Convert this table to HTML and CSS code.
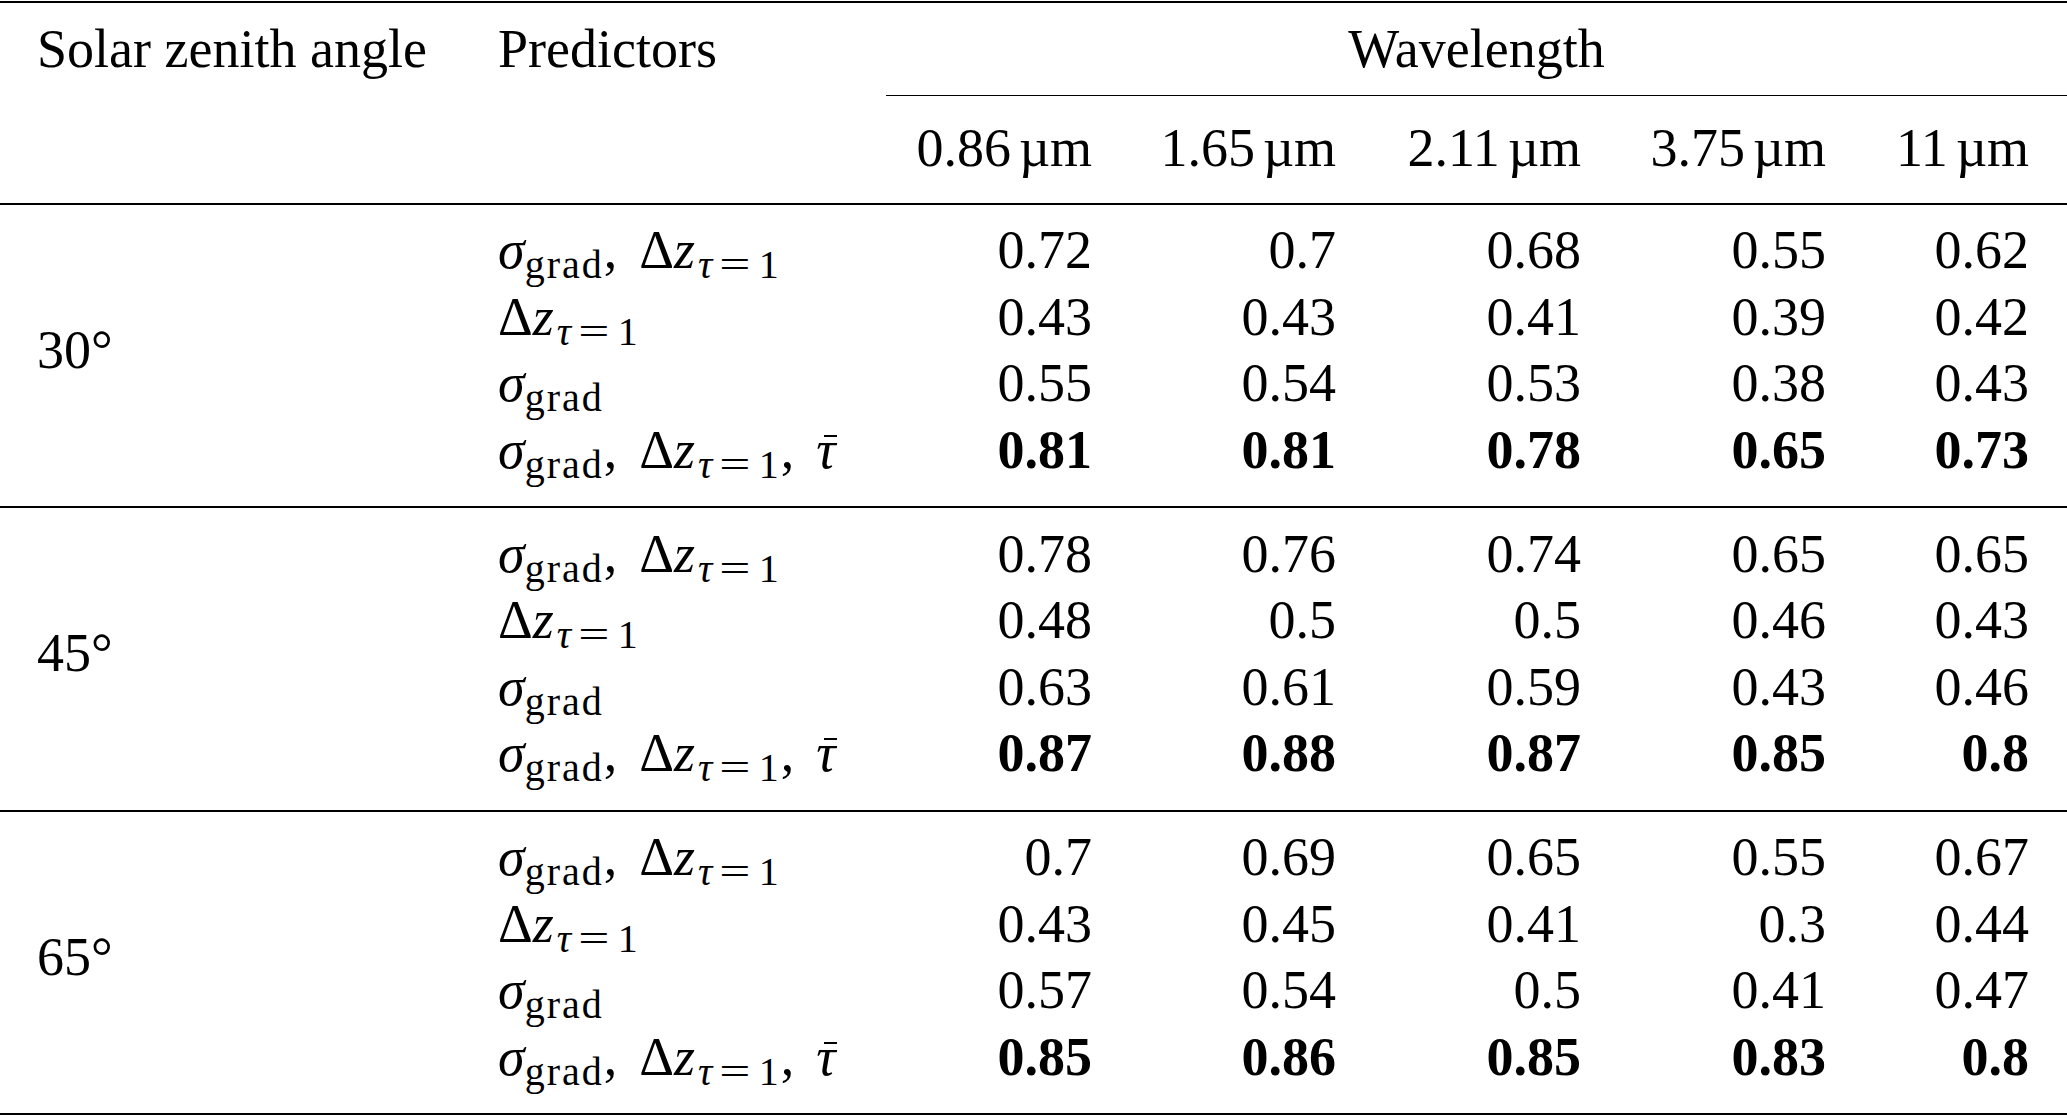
FILE: index.html
```html
<!DOCTYPE html>
<html lang="en">
<head>
<meta charset="utf-8">
<title>Correlation table</title>
<link rel="stylesheet" href="styles.css">
</head>
<body>
<div class="table">
  <div class="head">
    <div class="hcell angle-h">Solar zenith angle</div>
    <div class="hcell pred">Predictors</div>
    <div class="hcell wave">Wavelength</div>
    <div class="num unit first-unit">0.86<span class="usp"></span>µm</div>
    <div class="num unit">1.65<span class="usp"></span>µm</div>
    <div class="num unit">2.11<span class="usp"></span>µm</div>
    <div class="num unit">3.75<span class="usp"></span>µm</div>
    <div class="num unit">11<span class="usp"></span>µm</div>
  </div>

  <div class="group">
    <div class="angle">30°</div>
    <div class="pred"><i>σ</i><sub>grad</sub>,<span class="sp"></span>Δ<i>z</i><sub class="tsub"><i>τ</i><span class="rel">=</span>1</sub></div>
    <div class="num">0.72</div><div class="num">0.7</div><div class="num">0.68</div><div class="num">0.55</div><div class="num">0.62</div>
    <div class="pred">Δ<i>z</i><sub class="tsub"><i>τ</i><span class="rel">=</span>1</sub></div>
    <div class="num">0.43</div><div class="num">0.43</div><div class="num">0.41</div><div class="num">0.39</div><div class="num">0.42</div>
    <div class="pred"><i>σ</i><sub>grad</sub></div>
    <div class="num">0.55</div><div class="num">0.54</div><div class="num">0.53</div><div class="num">0.38</div><div class="num">0.43</div>
    <div class="pred"><i>σ</i><sub>grad</sub>,<span class="sp"></span>Δ<i>z</i><sub class="tsub"><i>τ</i><span class="rel">=</span>1</sub>,<span class="sp"></span><span class="bar"><i>τ</i></span></div>
    <div class="num best">0.81</div><div class="num best">0.81</div><div class="num best">0.78</div><div class="num best">0.65</div><div class="num best">0.73</div>
  </div>

  <div class="group">
    <div class="angle">45°</div>
    <div class="pred"><i>σ</i><sub>grad</sub>,<span class="sp"></span>Δ<i>z</i><sub class="tsub"><i>τ</i><span class="rel">=</span>1</sub></div>
    <div class="num">0.78</div><div class="num">0.76</div><div class="num">0.74</div><div class="num">0.65</div><div class="num">0.65</div>
    <div class="pred">Δ<i>z</i><sub class="tsub"><i>τ</i><span class="rel">=</span>1</sub></div>
    <div class="num">0.48</div><div class="num">0.5</div><div class="num">0.5</div><div class="num">0.46</div><div class="num">0.43</div>
    <div class="pred"><i>σ</i><sub>grad</sub></div>
    <div class="num">0.63</div><div class="num">0.61</div><div class="num">0.59</div><div class="num">0.43</div><div class="num">0.46</div>
    <div class="pred"><i>σ</i><sub>grad</sub>,<span class="sp"></span>Δ<i>z</i><sub class="tsub"><i>τ</i><span class="rel">=</span>1</sub>,<span class="sp"></span><span class="bar"><i>τ</i></span></div>
    <div class="num best">0.87</div><div class="num best">0.88</div><div class="num best">0.87</div><div class="num best">0.85</div><div class="num best">0.8</div>
  </div>

  <div class="group">
    <div class="angle">65°</div>
    <div class="pred"><i>σ</i><sub>grad</sub>,<span class="sp"></span>Δ<i>z</i><sub class="tsub"><i>τ</i><span class="rel">=</span>1</sub></div>
    <div class="num">0.7</div><div class="num">0.69</div><div class="num">0.65</div><div class="num">0.55</div><div class="num">0.67</div>
    <div class="pred">Δ<i>z</i><sub class="tsub"><i>τ</i><span class="rel">=</span>1</sub></div>
    <div class="num">0.43</div><div class="num">0.45</div><div class="num">0.41</div><div class="num">0.3</div><div class="num">0.44</div>
    <div class="pred"><i>σ</i><sub>grad</sub></div>
    <div class="num">0.57</div><div class="num">0.54</div><div class="num">0.5</div><div class="num">0.41</div><div class="num">0.47</div>
    <div class="pred"><i>σ</i><sub>grad</sub>,<span class="sp"></span>Δ<i>z</i><sub class="tsub"><i>τ</i><span class="rel">=</span>1</sub>,<span class="sp"></span><span class="bar"><i>τ</i></span></div>
    <div class="num best">0.85</div><div class="num best">0.86</div><div class="num best">0.85</div><div class="num best">0.83</div><div class="num best">0.8</div>
  </div>
</div>
</body>
</html>
```
FILE: styles.css
```css
html, body {
  margin: 0;
  padding: 0;
  background: #ffffff;
}

body {
  font-family: "Liberation Serif", "Times New Roman", serif;
  font-size: 54px;
  color: #000000;
}

.table {
  width: 2067px;
  margin-top: 1px;
  border-top: 2px solid #000;
}

.head,
.group {
  display: grid;
  grid-template-columns: 461px 425px 244px 244px 245px 245px 203px;
  line-height: 66.5px;
}

.head {
  padding: 12.5px 0 21px;
  border-bottom: 2px solid #000;
}

.hcell {
  align-self: start;
}

.angle-h,
.angle {
  padding-left: 37px;
  white-space: nowrap;
}

.pred {
  padding-left: 37px;
  white-space: nowrap;
}

.wave {
  grid-column: 3 / span 5;
  text-align: center;
  padding-bottom: 12.5px;
  border-bottom: 1.5px solid #000;
}

.unit {
  padding-top: 19.5px;
}

.first-unit {
  grid-column: 3;
}

.usp {
  display: inline-block;
  width: 8px;
}

.num {
  text-align: right;
  padding-right: 38px;
  white-space: nowrap;
}

.best {
  font-weight: bold;
}

.group {
  grid-auto-rows: 66.5px;
  padding: 12.5px 0 23px;
  border-bottom: 2px solid #000;
}

.angle {
  grid-column: 1;
  grid-row: 1 / span 4;
  align-self: center;
}

.pred i {
  font-style: italic;
}

.sp {
  display: inline-block;
  width: 22px;
}

sub {
  font-size: 40px;
  letter-spacing: 2px;
  line-height: 0;
  vertical-align: -10px;
}

.tsub {
  margin-left: 3px;
}

.rel {
  display: inline-block;
  margin: 0 10px;
  transform: scaleX(1.38);
}

.bar {
  position: relative;
  display: inline-block;
  line-height: 1;
}

.bar::after {
  content: "";
  position: absolute;
  left: 0.14em;
  right: -0.02em;
  top: 12px;
  border-top: 2px solid #000;
}
```
